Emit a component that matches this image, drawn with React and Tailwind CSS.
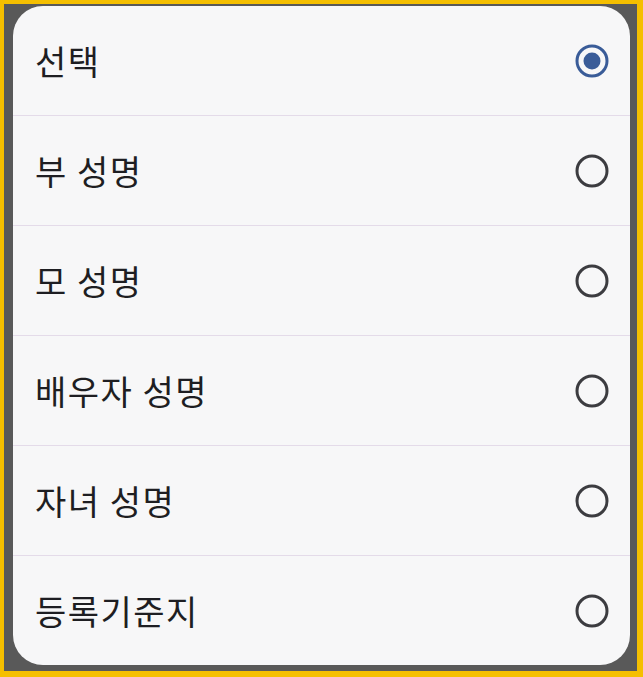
import React from "react";

const items = ["선택", "부 성명", "모 성명", "배우자 성명", "자녀 성명", "등록기준지"];

function Radio({ checked }) {
  return (
    <svg width="36" height="36" viewBox="0 0 36 36">
      <circle
        cx="18"
        cy="18"
        r="15"
        fill="none"
        stroke={checked ? "#3a5c98" : "#3c3c40"}
        strokeWidth="3"
      />
      {checked && <circle cx="18" cy="18" r="8.5" fill="#3a5c98" />}
    </svg>
  );
}

export default function App() {
  return (
    <div className="w-[643px] h-[677px] bg-[#f5bf00] pt-[4px] pl-[4px] pr-[6px] pb-[6px]">
      <div className="w-full h-full bg-[#595959] pt-[2px] pl-[9px] pr-[7px] pb-[6px]">
        <div
          className="w-full h-full bg-[#f7f7f8] rounded-[30px] overflow-hidden flex flex-col"
          style={{ fontFamily: '"Noto Sans CJK KR", "Noto Sans", sans-serif' }}
        >
          {items.map((t, i) => (
            <div
              key={t}
              className={
                i === 0
                  ? "flex-1 flex items-center justify-between pl-[22px] pr-[20px]"
                  : "flex-1 flex items-center justify-between pl-[22px] pr-[20px] border-t border-[#e4dbe9]"
              }
            >
              <span className="text-[34px] tracking-[1.5px] text-[#1e1e22] leading-none">{t}</span>
              <Radio checked={i === 0} />
            </div>
          ))}
        </div>
      </div>
    </div>
  );
}
